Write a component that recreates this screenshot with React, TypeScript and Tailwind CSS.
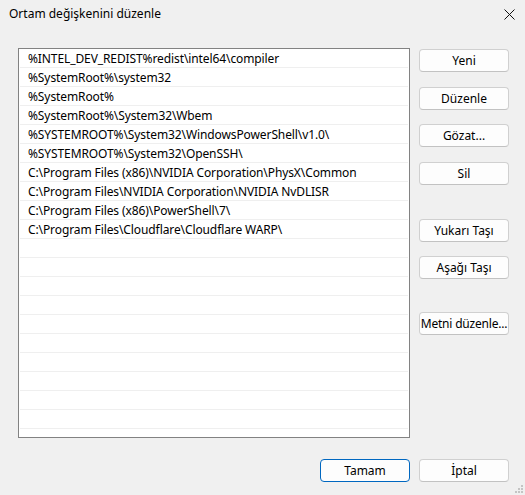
import React from "react";

const paths = [
  "%INTEL_DEV_REDIST%redist\\intel64\\compiler",
  "%SystemRoot%\\system32",
  "%SystemRoot%",
  "%SystemRoot%\\System32\\Wbem",
  "%SYSTEMROOT%\\System32\\WindowsPowerShell\\v1.0\\",
  "%SYSTEMROOT%\\System32\\OpenSSH\\",
  "C:\\Program Files (x86)\\NVIDIA Corporation\\PhysX\\Common",
  "C:\\Program Files\\NVIDIA Corporation\\NVIDIA NvDLISR",
  "C:\\Program Files (x86)\\PowerShell\\7\\",
  "C:\\Program Files\\Cloudflare\\Cloudflare WARP\\",
];

const rows = [...paths, ...Array(11).fill("")];

function Btn({
  label,
  primary,
  className = "",
}: {
  label: string;
  primary?: boolean;
  className?: string;
}) {
  return (
    <button
      className={`w-[90px] h-[23px] rounded-[4px] bg-[#fdfdfd] text-[12px] text-black flex items-center justify-center leading-none whitespace-nowrap overflow-visible ${
        primary
          ? "border border-[#0067c0]"
          : "border border-[#d0d0d0] border-b-[#c2c2c2]"
      } ${className}`}
    >
      {label}
    </button>
  );
}

export default function App() {
  return (
    <div
      className="relative w-[525px] h-[495px] bg-[#f0f0f0] flex flex-col text-black"
      style={{ fontFamily: '"Noto Sans", "Open Sans", sans-serif' }}
    >
      {/* title bar */}
      <div className="h-[28px] flex items-center justify-between pl-[9px] pr-[10px]">
        <span className="text-[12px]">Ortam değişkenini düzenle</span>
        <svg width="11" height="11" viewBox="0 0 11 11">
          <path d="M0.5 0.5 L10.5 10.5 M10.5 0.5 L0.5 10.5" stroke="#111" strokeWidth="1" />
        </svg>
      </div>

      {/* body */}
      <div className="flex pt-[20px] pl-[18px]">
        <div className="w-[392px] h-[390px] border border-[#828282] bg-white overflow-hidden px-[1px]">
          {rows.map((r, i) => (
            <div
              key={i}
              className="h-[19px] border-b border-[#efefef] pl-[8px] text-[12px] leading-[20px] whitespace-nowrap tracking-[-0.1px]"
            >
              {r}
            </div>
          ))}
        </div>

        <div className="ml-[9px] flex flex-col">
          <Btn label="Yeni" className="mt-[1px]" />
          <Btn label="Düzenle" className="mt-[15px]" />
          <Btn label="Gözat..." className="mt-[14px]" />
          <Btn label="Sil" className="mt-[15px]" />
          <Btn label="Yukarı Taşı" className="mt-[34px]" />
          <Btn label="Aşağı Taşı" className="mt-[14px]" />
          <Btn label="Metni düzenle..." className="mt-[33px] tracking-[-0.2px]" />
        </div>
      </div>

      {/* footer */}
      <div className="flex justify-end gap-[9px] pr-[16px] mt-[21px]">
        <Btn label="Tamam" primary />
        <Btn label="İptal" />
      </div>

      {/* size grip */}
      <svg
        width="10"
        height="10"
        viewBox="0 0 10 10"
        className="absolute right-[2px] bottom-[2px]"
      >
        {[
          [8, 0],
          [5, 3],
          [8, 3],
          [2, 6],
          [5, 6],
          [8, 6],
        ].map(([x, y], i) => (
          <rect key={i} x={x} y={y + 2} width="2" height="2" fill="#c4c4c4" />
        ))}
      </svg>
    </div>
  );
}
